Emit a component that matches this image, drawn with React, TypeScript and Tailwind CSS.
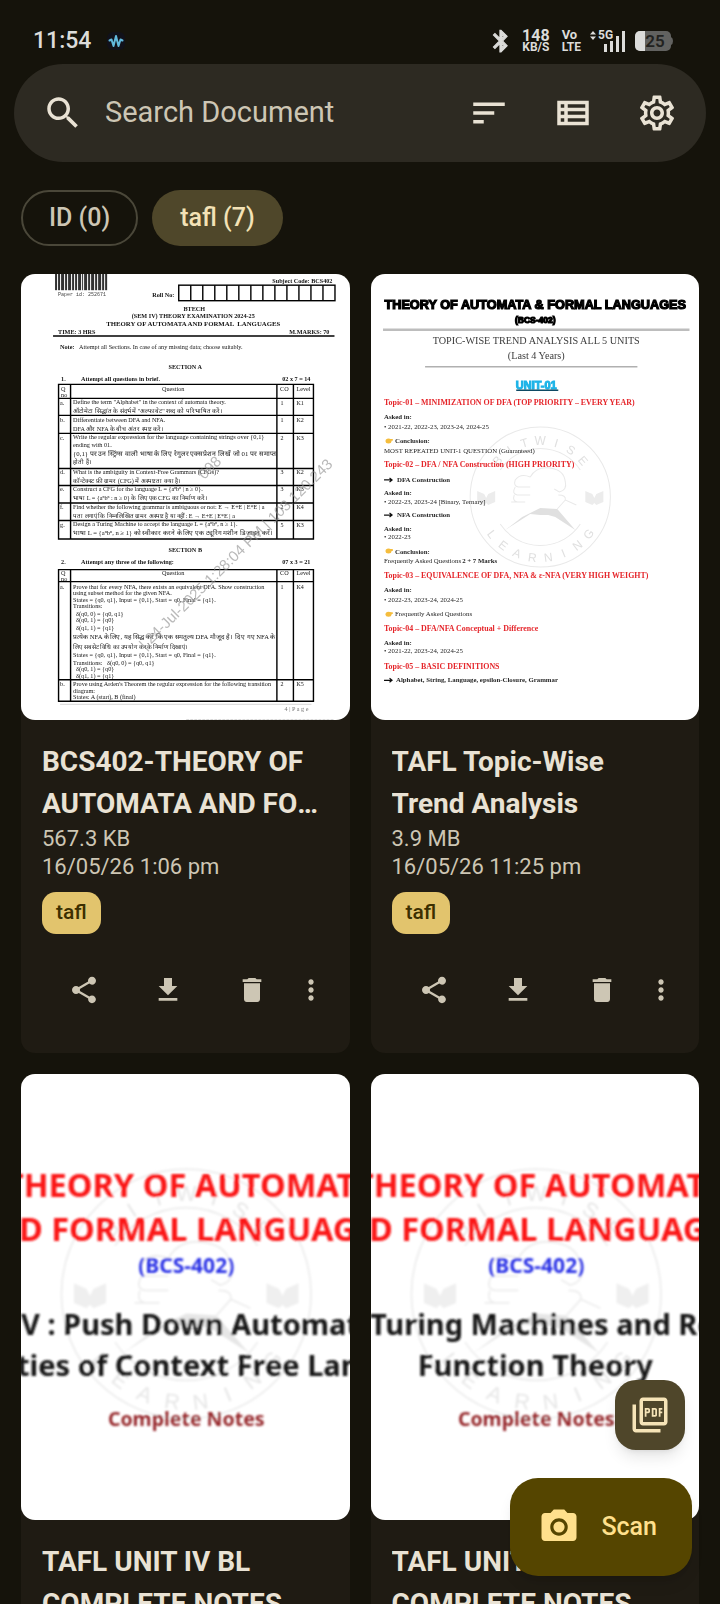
import type { ReactNode } from "react";

/* ---------- icons ---------- */

const ICONS = {
  search:
    "M15.5 14h-.79l-.28-.27C15.41 12.59 16 11.11 16 9.5 16 5.91 13.09 3 9.5 3S3 5.91 3 9.5 5.91 16 9.5 16c1.61 0 3.09-.59 4.23-1.57l.27.28v.79l5 4.99L20.49 19l-4.99-5zm-6 0C7.01 14 5 11.99 5 9.5S7.01 5 9.5 5 14 7.01 14 9.5 11.99 14 9.5 14z",
  sort: "M3 18h6v-2H3v2zM3 6v2h18V6H3zm0 7h12v-2H3v2z",
  list: "M3 5v14h18V5H3zm4 2v2H5V7h2zm-2 6v-2h2v2H5zm0 2h2v2H5v-2zm14 2H9v-2h10v2zm0-4H9v-2h10v2zm0-4H9V7h10v2z",
  settings:
    "M19.43 12.98c.04-.32.07-.64.07-.98 0-.34-.03-.66-.07-.98l2.11-1.65c.19-.15.24-.42.12-.64l-2-3.46c-.09-.16-.26-.25-.44-.25-.06 0-.12.01-.17.03l-2.49 1c-.52-.4-1.08-.73-1.69-.98l-.38-2.65C14.46 2.18 14.25 2 14 2h-4c-.25 0-.46.18-.49.42l-.38 2.65c-.61.25-1.17.59-1.69.98l-2.49-1c-.06-.02-.12-.03-.18-.03-.17 0-.34.09-.43.25l-2 3.46c-.13.22-.07.49.12.64l2.11 1.65c-.04.32-.07.65-.07.98 0 .33.03.66.07.98l-2.11 1.65c-.19.15-.24.42-.12.64l2 3.46c.09.16.26.25.44.25.06 0 .12-.01.17-.03l2.49-1c.52.4 1.08.73 1.69.98l.38 2.65c.03.24.24.42.49.42h4c.25 0 .46-.18.49-.42l.38-2.65c.61-.25 1.17-.59 1.69-.98l2.49 1c.06.02.12.03.18.03.17 0 .34-.09.43-.25l2-3.46c.12-.22.07-.49-.12-.64l-2.11-1.65zm-1.98-1.71c.04.31.05.52.05.73 0 .21-.02.43-.05.73l-.14 1.13.89.7 1.08.84-.7 1.21-1.27-.51-1.04-.42-.9.68c-.43.32-.84.56-1.25.73l-1.06.43-.16 1.13-.2 1.35h-1.4l-.19-1.35-.16-1.13-1.06-.43c-.43-.18-.83-.41-1.23-.71l-.91-.7-1.06.43-1.27.51-.7-1.21 1.08-.84.89-.7-.14-1.13c-.03-.31-.05-.54-.05-.74s.02-.43.05-.73l.14-1.13-.89-.7-1.08-.84.7-1.21 1.27.51 1.04.42.9-.68c.43-.32.84-.56 1.25-.73l1.06-.43.16-1.13.2-1.35h1.39l.19 1.35.16 1.13 1.06.43c.43.18.83.41 1.23.71l.91.7 1.06-.43 1.27-.51.7 1.21-1.07.85-.89.7.14 1.13zM12 8c-2.21 0-4 1.79-4 4s1.79 4 4 4 4-1.79 4-4-1.79-4-4-4zm0 6c-1.1 0-2-.9-2-2s.9-2 2-2 2 .9 2 2-.9 2-2 2z",
  share:
    "M18 16.08c-.76 0-1.44.3-1.96.77L8.91 12.7c.05-.23.09-.46.09-.7s-.04-.47-.09-.7l7.05-4.11c.54.5 1.25.81 2.04.81 1.66 0 3-1.34 3-3s-1.34-3-3-3-3 1.34-3 3c0 .24.04.47.09.7L8.04 9.81C7.5 9.31 6.79 9 6 9c-1.66 0-3 1.34-3 3s1.34 3 3 3c.79 0 1.5-.31 2.04-.81l7.12 4.16c-.05.21-.08.43-.08.65 0 1.61 1.31 2.92 2.92 2.92s2.92-1.31 2.92-2.92-1.31-2.92-2.92-2.92z",
  download: "M19 9h-4V3H9v6H5l7 7 7-7zM5 18v2h14v-2H5z",
  trash: "M6 19c0 1.1.9 2 2 2h8c1.1 0 2-.9 2-2V7H6v12zM19 4h-3.5l-1-1h-5l-1 1H5v2h14V4z",
  more: "M12 8c1.1 0 2-.9 2-2s-.9-2-2-2-2 .9-2 2 .9 2 2 2zm0 2c-1.1 0-2 .9-2 2s.9 2 2 2 2-.9 2-2-.9-2-2-2zm0 6c-1.1 0-2 .9-2 2s.9 2 2 2 2-.9 2-2-.9-2-2-2z",
  pdf: "M20 2H8c-1.1 0-2 .9-2 2v12c0 1.1.9 2 2 2h12c1.1 0 2-.9 2-2V4c0-1.1-.9-2-2-2zm0 14H8V4h12v12zM4 6H2v14c0 1.1.9 2 2 2h14v-2H4V6zm12 6V9c0-.55-.45-1-1-1h-2v5h2c.55 0 1-.45 1-1zm-2-3h1v3h-1V9zm4 2h1v-1h-1V9h1V8h-2v5h1zm-8 0h1c.55 0 1-.45 1-1V9c0-.55-.45-1-1-1H9v5h1v-2zm0-2h1v1h-1V9z",
  camera:
    "M12 8.8a3.2 3.2 0 1 0 0 6.4 3.2 3.2 0 0 0 0-6.4zM9 2L7.17 4H4c-1.1 0-2 .9-2 2v12c0 1.1.9 2 2 2h16c1.1 0 2-.9 2-2V6c0-1.1-.9-2-2-2h-3.17L15 2H9zm3 15c-2.76 0-5-2.24-5-5s2.24-5 5-5 5 2.24 5 5-2.24 5-5 5z",
  bluetooth:
    "M17.71 7.71L12 2h-1v7.59L6.41 5 5 6.41 10.59 12 5 17.59 6.41 19 11 14.41V22h1l5.71-5.71-4.3-4.29 4.3-4.29zM13 5.83l1.88 1.88L13 9.59V5.83zm1.88 10.46L13 18.17v-3.76l1.88 1.88z",
};

function Icon({ name, className }: { name: keyof typeof ICONS; className: string }) {
  return (
    <svg viewBox="0 0 24 24" fill="currentColor" aria-hidden="true" className={className}>
      <path d={ICONS[name]} />
    </svg>
  );
}

/* ---------- status bar ---------- */

function StatusBar() {
  return (
    <div className="flex h-16 shrink-0 items-center justify-between pt-[18px] pr-[47px] pl-[33px] text-[#dcdcda]">
      <div className="flex items-center gap-4">
        <span className="text-[23px] font-medium">11:54</span>
        <svg viewBox="0 0 18 18" className="size-[18px]" aria-hidden="true">
          <rect width="18" height="18" rx="6" fill="#11111a" />
          <path
            d="M2.500 8.500l2-1 2 6.500 2.500-10 2.500 10 2-6.500 2 1"
            fill="none"
            stroke="#62b9dc"
            strokeWidth="2"
            strokeLinecap="round"
            strokeLinejoin="round"
          />
        </svg>
      </div>
      <div className="flex items-center gap-2">
        <Icon name="bluetooth" className="size-[26px] stroke-current stroke-1" />
        <div className="flex flex-col items-center font-bold">
          <span className="text-[16px] leading-[13px]">148</span>
          <span className="text-[12px] leading-[11px]">KB/S</span>
        </div>
        <div className="flex flex-col items-start pl-1 font-bold">
          <span className="text-[13px] leading-3">Vo</span>
          <span className="text-[12px] leading-3">LTE</span>
        </div>
        <svg viewBox="0 0 38 24" className="h-6 w-[38px]" fill="currentColor" aria-hidden="true">
          <path d="M1 5.500L4 2l3 3.500zM1 7.500L4 11l3-3.500z" />
          <text x="9" y="10" fontSize="12" fontWeight="700" fontFamily="Roboto, sans-serif">
            5G
          </text>
          <rect x="15" y="15" width="3" height="8" />
          <rect x="21" y="12" width="3" height="11" />
          <rect x="27" y="7" width="3" height="16" />
          <rect x="33" y="2" width="3" height="21" />
        </svg>
        <svg viewBox="0 0 38 22" className="h-[22px] w-[38px]" aria-hidden="true">
          <rect x="0" y="1" width="36" height="20" rx="5" fill="#626260" />
          <path d="M36 7q2 1 2 4t-2 4z" fill="#626260" />
          <path d="M5 1h5v20H5a5 5 0 0 1-5-5V6a5 5 0 0 1 5-5z" fill="#dcdcda" />
          <text x="20" y="17" textAnchor="middle" fontSize="17" fontWeight="600" fontFamily="Roboto, sans-serif" fill="#22221f">
            25
          </text>
        </svg>
      </div>
    </div>
  );
}

/* ---------- thumbnails ---------- */

const SERIF = "'Liberation Serif', serif";

function Page({ id, blur, label, children }: { id: string; blur: number; label: string; children: ReactNode }) {
  return (
    <svg
      viewBox="0 0 328 446"
      preserveAspectRatio="xMidYMid slice"
      role="img"
      aria-label={label}
      className="block h-[446px] w-full rounded-[14px] bg-white"
    >
      <defs>
        <filter id={id} x="-5%" y="-5%" width="110%" height="110%">
          <feGaussianBlur stdDeviation={blur} />
        </filter>
      </defs>
      <g filter={`url(#${id})`}>{children}</g>
    </svg>
  );
}

function Seal({ x, y, scale, opacity = 1 }: { x: number; y: number; scale: number; opacity?: number }) {
  return (
    <g transform={`translate(${x} ${y}) scale(${scale})`} opacity={opacity} fill="none" stroke="#e9e9e9" strokeWidth="1">
      <circle r="70" />
      <path d="M-40 -27A48 48 0 0 1 40 -27M40 27A48 48 0 0 1 -40 27" />
      <g fill="#e0e0e0" stroke="none" fontSize="12" fontFamily="'Liberation Sans', sans-serif" textAnchor="middle">
        {"BITWISE".split("").map((c, i) => (
          <text key={i} y="-52" transform={`rotate(${(i - 3) * 16.5})`}>
            {c}
          </text>
        ))}
        {"LEARNING".split("").map((c, i) => (
          <text key={i} y="65" transform={`rotate(${(3.5 - i) * 15})`}>
            {c}
          </text>
        ))}
      </g>
      <path d="M-10 -20q-10 -4 -15 3q-2 6 3 7h12M-25 -10q-4 7 2 8h13M-26 -2q-2 6 3 7h8M-24 5l-5 0M-10 -20q6 -11 20 -9q14 2 15 14q2 8 -6 10l-5 -3M18 -2q8 0 7 5l11 5M25 3l-8 9" />
      <path d="M-35 33L-18 20L0 11L17 12L35 33L15 20L8 18L0 18L-10 17Z" fill="#e0e0e0" stroke="none" />
      <g fill="#ececec" stroke="none">
        <path d="M-63 -6l7 3l2 4l2-4l7-3v11l-7 3l-2-2l-2 2l-7-3z" />
        <path d="M45 -6l7 3l2 4l2-4l7-3v11l-7 3l-2-2l-2 2l-7-3z" />
      </g>
    </g>
  );
}

type Line = { x: number; y: number; t: string; s?: number; b?: boolean; a?: "middle" | "end"; c?: string };

function Lines({ lines, color, size }: { lines: Line[]; color: string; size: number }) {
  return (
    <g fontFamily={SERIF}>
      {lines.map((l, i) => (
        <text
          key={i}
          x={l.x}
          y={l.y}
          fontSize={l.s ?? size}
          fontWeight={l.b ? 700 : 400}
          textAnchor={l.a ?? "start"}
          fill={l.c ?? color}
        >
          {l.t}
        </text>
      ))}
    </g>
  );
}

const EXAM_LINES: Line[] = [
  { x: 311, y: 9, t: "Subject Code: BCS402", b: true, a: "end" },
  { x: 131, y: 23, t: "Roll No:", b: true },
  { x: 173, y: 37, t: "BTECH", b: true, a: "middle" },
  { x: 172, y: 44, t: "(SEM IV) THEORY EXAMINATION 2024-25", b: true, a: "middle" },
  { x: 172, y: 52, t: "THEORY OF AUTOMATA AND FORMAL \u00a0LANGUAGES", s: 6.8, b: true, a: "middle" },
  { x: 37, y: 60, t: "TIME: 3 HRS", b: true },
  { x: 308, y: 60, t: "M.MARKS: 70", b: true, a: "end" },
  { x: 39, y: 75, t: "Note:", b: true },
  { x: 58, y: 75, t: "Attempt all Sections. In case of any missing data; choose suitably." },
  { x: 164, y: 95, t: "SECTION A", b: true, a: "middle" },
  { x: 40, y: 107, t: "1.", b: true },
  { x: 60, y: 107, t: "Attempt all questions in brief.", b: true },
  { x: 289, y: 107, t: "02 x 7 = 14", b: true, a: "end" },
  { x: 40, y: 117, t: "Q" },
  { x: 40, y: 123, t: "no" },
  { x: 152, y: 117, t: "Question", a: "middle" },
  { x: 263, y: 117, t: "CO", a: "middle" },
  { x: 282, y: 117, t: "Level", a: "middle" },
  { x: 39, y: 131, t: "a." },
  { x: 52, y: 130, t: "Define the term \"Alphabet\" in the context of automata theory." },
  { x: 52, y: 139, t: "ऑटोमेटा सिद्धांत के संदर्भ में \"अल्फाबेट\" शब्द को परिभाषित करें।" },
  { x: 39, y: 148, t: "b." },
  { x: 52, y: 148, t: "Differentiate between DFA and NFA." },
  { x: 52, y: 157, t: "DFA और NFA के बीच अंतर स्पष्ट करें।" },
  { x: 39, y: 166, t: "c." },
  { x: 52, y: 165, t: "Write the regular expression for the language containing strings over {0,1}", s: 6.4 },
  { x: 52, y: 173, t: "ending with 01." },
  { x: 52, y: 182, t: "{0,1} पर उन स्ट्रिंग्स वाली भाषा के लिए रेगुलर एक्सप्रेशन लिखें जो 01 पर समाप्त", s: 6.8 },
  { x: 52, y: 190, t: "होती हैं।" },
  { x: 39, y: 200, t: "d." },
  { x: 52, y: 200, t: "What is the ambiguity in Context-Free Grammars (CFGs)?" },
  { x: 52, y: 209, t: "कॉन्टेक्स्ट फ्री ग्रामर (CFG) में अस्पष्टता क्या है।" },
  { x: 39, y: 217, t: "e." },
  { x: 52, y: 217, t: "Construct a CFG for the language L = {aⁿbⁿ | n ≥ 0}." },
  { x: 52, y: 226, t: "भाषा L = {aⁿbⁿ : n ≥ 0} के लिए एक CFG का निर्माण करें।" },
  { x: 39, y: 235, t: "f." },
  { x: 52, y: 235, t: "Find whether the following grammar is ambiguous or not: E → E+E | E*E | a" },
  { x: 52, y: 244, t: "पता लगाएं कि निम्नलिखित ग्रामर अस्पष्ट है या नहीं: E → E+E | E*E | a" },
  { x: 39, y: 253, t: "g." },
  { x: 52, y: 252, t: "Design a Turing Machine to accept the language L = {aⁿbⁿ, n ≥ 1}." },
  { x: 52, y: 261, t: "भाषा L = {aⁿbⁿ, n ≥ 1} को स्वीकार करने के लिए एक ट्यूरिंग मशीन डिज़ाइन करें।", s: 6.6 },
  { x: 164, y: 278, t: "SECTION B", b: true, a: "middle" },
  { x: 40, y: 290, t: "2.", b: true },
  { x: 60, y: 290, t: "Attempt any three of the following:", b: true },
  { x: 289, y: 290, t: "07 x 3 = 21", b: true, a: "end" },
  { x: 40, y: 301, t: "Q" },
  { x: 40, y: 307, t: "no" },
  { x: 152, y: 301, t: "Question", a: "middle" },
  { x: 263, y: 301, t: "CO", a: "middle" },
  { x: 282, y: 301, t: "Level", a: "middle" },
  { x: 39, y: 315, t: "a." },
  { x: 52, y: 315, t: "Prove that for every NFA, there exists an equivalent DFA. Show construction" },
  { x: 52, y: 321, t: "using subset method for the given NFA." },
  { x: 52, y: 328, t: "States = {q0, q1}, Input = {0,1}, Start = q0, Final = {q1}." },
  { x: 52, y: 334, t: "Transitions:" },
  { x: 55, y: 342, t: "δ(q0, 0) = {q0, q1}" },
  { x: 55, y: 348, t: "δ(q0, 1) = {q0}" },
  { x: 55, y: 356, t: "δ(q1, 1) = {q1}" },
  { x: 52, y: 365, t: "प्रत्येक NFA के लिए, यह सिद्ध करें कि एक समतुल्य DFA मौजूद है। दिए गए NFA के", s: 6.6 },
  { x: 52, y: 375, t: "लिए सबसेट विधि का उपयोग करके निर्माण दिखाएं।" },
  { x: 52, y: 383, t: "States = {q0, q1}, Input = {0,1}, Start = q0, Final = {q1}." },
  { x: 52, y: 391, t: "Transitions: \u00a0 δ(q0, 0) = {q0, q1}" },
  { x: 55, y: 397, t: "δ(q0, 1) = {q0}" },
  { x: 55, y: 404, t: "δ(q1, 1) = {q1}" },
  { x: 39, y: 412, t: "b." },
  { x: 52, y: 412, t: "Prove using Arden's Theorem the regular expression for the following transition" },
  { x: 52, y: 419, t: "diagram:" },
  { x: 52, y: 425, t: "States: A (start), B (final)" },
  { x: 287, y: 437, t: "4 | P a g e", a: "end", c: "#777" },
];

const EXAM_LEVELS: [number, string, string][] = [
  [131, "1", "K1"],
  [148, "1", "K2"],
  [166, "2", "K3"],
  [200, "3", "K2"],
  [217, "3", "K3"],
  [235, "2", "K4"],
  [253, "5", "K3"],
  [315, "1", "K4"],
  [412, "2", "K5"],
];

const BARS = [2, 1, 2, 1, 3, 1, 2, 1, 3, 1, 2, 1, 2, 1, 3, 1, 1, 1, 3, 1, 2, 1, 3, 1, 2, 1, 3, 1, 2, 1, 2];

function ExamPaper() {
  let bx = 34;
  return (
    <Page id="soft-exam" blur={0.6} label="BCS402 question paper">
      {BARS.map((w, i) => {
        const x = bx;
        bx += w;
        return i % 2 ? null : <rect key={i} x={x} y="0" width={w} height="16.500" fill="#333" />;
      })}
      <text x="37" y="22" fontSize="5" fontFamily="'Liberation Mono', monospace" fill="#444">
        Paper id: 252671
      </text>
      <g fill="none" stroke="#000" strokeWidth="1.400">
        <rect x="157.500" y="11.500" width="156" height="15.500" />
        {Array.from({ length: 12 }, (_, i) => (
          <path key={i} d={`M${169.5 + i * 12} 11.5v15.5`} />
        ))}
        <path d="M32 62.300H313" />
        <path d="M37.500 110.500H292V265H37.500ZM49.500 110.500V265M255.500 110.500V265M272 110.500V265M37.500 124.500H292M37.500 141.500H292M37.500 159.500H292M37.500 194.500H292M37.500 211.500H292M37.500 229H292M37.500 246.500H292" />
        <path d="M37.500 295.500H292V427H37.500ZM49.500 295.500V427M255.500 295.500V427M272 295.500V427M37.500 307.500H292M37.500 405.500H292" />
      </g>
      <path d="M39 430H290" stroke="#ccc" strokeWidth="0.800" />
      <path d="M165 445.500H313" stroke="#ccc" strokeWidth="1" strokeDasharray="3 1" />
      <Lines lines={EXAM_LINES} color="#141414" size={6.2} />
      <g fontFamily={SERIF} fontSize="6" fill="#141414">
        {EXAM_LEVELS.map(([y, co, level]) => (
          <g key={y}>
            <text x="259" y={y}>{co}</text>
            <text x="275" y={y}>{level}</text>
          </g>
        ))}
      </g>
      <g fontFamily="'Liberation Sans', sans-serif" fontSize="15" fill="#8a8a8a" fillOpacity="0.600">
        <text transform="translate(124 376) rotate(-44.500)">| 24-Jul-2025 1:28:04 PM | 103.120.243</text>
        <text transform="translate(183 206) rotate(-44.500)">098</text>
      </g>
    </Page>
  );
}

const RED = "#e5262b";

const TREND_LINES: Line[] = [
  { x: 165, y: 70, t: "TOPIC-WISE TREND ANALYSIS ALL 5 UNITS", s: 10.2, a: "middle", c: "#3c3c3c" },
  { x: 165, y: 85, t: "(Last 4 Years)", s: 10.2, a: "middle", c: "#3c3c3c" },
  { x: 13, y: 131, t: "Topic-01 – MINIMIZATION OF DFA (TOP PRIORITY – EVERY YEAR)", s: 7.9, b: true, c: RED },
  { x: 13, y: 145, t: "Asked in:", b: true },
  { x: 13, y: 155, t: "• 2021-22, 2022-23, 2023-24, 2024-25" },
  { x: 24, y: 169, t: "Conclusion:", b: true },
  { x: 13, y: 179, t: "MOST REPEATED UNIT-1 QUESTION (Guaranteed)" },
  { x: 13, y: 193, t: "Topic-02 – DFA / NFA Construction (HIGH PRIORITY)", s: 7.9, b: true, c: RED },
  { x: 26, y: 208, t: "DFA Construction", b: true },
  { x: 13, y: 221, t: "Asked in:", b: true },
  { x: 13, y: 230, t: "• 2022-23, 2023-24 [Binary, Ternary]" },
  { x: 26, y: 243, t: "NFA Construction", b: true },
  { x: 13, y: 257, t: "Asked in:", b: true },
  { x: 13, y: 265, t: "• 2022-23" },
  { x: 24, y: 280, t: "Conclusion:", b: true },
  { x: 13, y: 289, t: "Frequently Asked Questions" },
  { x: 91, y: 289, t: "2 + 7 Marks", b: true },
  { x: 13, y: 304, t: "Topic-03 – EQUIVALENCE OF DFA, NFA & ε-NFA (VERY HIGH WEIGHT)", s: 7.9, b: true, c: RED },
  { x: 13, y: 318, t: "Asked in:", b: true },
  { x: 13, y: 328, t: "• 2022-23, 2023-24, 2024-25" },
  { x: 24, y: 342, t: "Frequently Asked Questions" },
  { x: 13, y: 357, t: "Topic-04 – DFA/NFA Conceptual + Difference", s: 7.9, b: true, c: RED },
  { x: 13, y: 371, t: "Asked in:", b: true },
  { x: 13, y: 379, t: "• 2021-22, 2023-24, 2024-25" },
  { x: 13, y: 395, t: "Topic-05 – BASIC DEFINITIONS", s: 7.9, b: true, c: RED },
  { x: 25, y: 408, t: "Alphabet, String, Language, epsilon-Closure, Grammar", b: true },
];

function TrendSheet() {
  return (
    <Page id="soft-trend" blur={0.6} label="TAFL topic-wise trend analysis">
      <Seal x={169} y={223} scale={1} />
      <g fontFamily="'Liberation Sans', sans-serif" fontWeight="700" textAnchor="middle">
        <g stroke="#000" strokeWidth="1.200">
          <text x="164" y="35" fontSize="12.700">THEORY OF AUTOMATA &amp; FORMAL LANGUAGES</text>
          <text x="164" y="49" fontSize="8.500">(BCS-402)</text>
        </g>
        <text x="165" y="115" fontSize="11" fill="#1fb4e8" stroke="#1fb4e8" strokeWidth="1">
          UNIT-01
        </text>
      </g>
      <path d="M145 116.500H187" stroke="#0b4a63" strokeWidth="1.500" />
      <path d="M12 56H318" stroke="#bdbdbd" strokeWidth="2.500" />
      <path d="M54 93H266" stroke="#b0b0b0" strokeWidth="1.500" />
      <Lines lines={TREND_LINES} color="#262626" size={6.8} />
      {[206, 241, 406].map((y) => (
        <path key={y} d={`M13 ${y}h8m-2.500-2l2.500 2l-2.500 2`} fill="none" stroke="#111" strokeWidth="1.200" />
      ))}
      {[167, 277, 340].map((y) => (
        <g key={y} fill="#f5bd3d">
          <ellipse cx="17.500" cy={y} rx="3" ry="2.500" />
          <rect x="18" y={y - 2} width="4" height="1.800" rx="0.900" />
        </g>
      ))}
    </Page>
  );
}

function NotesCover({ id, lines }: { id: string; lines: { x: number; y: number; t: string; a?: "middle" }[] }) {
  return (
    <Page id={id} blur={0.9} label="Complete notes cover">
      <Seal x={165} y={220} scale={1.78} opacity={0.8} />
      <g fontFamily="'Noto Sans', sans-serif" fontWeight="700" textAnchor="middle">
        <g fontSize="32.500" fill="#fb1417">
          <text x="169" y="123">THEORY OF AUTOMATA</text>
          <text x="160" y="167">AND FORMAL LANGUAGES</text>
        </g>
        <text x="165" y="199" fontSize="21" fill="#2a32e6">(BCS-402)</text>
        <g fontSize="29" fill="#161616">
          {lines.map((l) => (
            <text key={l.t} x={l.x} y={l.y} textAnchor={l.a ?? "start"}>
              {l.t}
            </text>
          ))}
        </g>
        <text x="165" y="352" fontSize="19.500" fill="#96282c">Complete Notes</text>
      </g>
    </Page>
  );
}

/* ---------- document cards ---------- */

function CardButton({ icon, label }: { icon: keyof typeof ICONS; label: string }) {
  return (
    <button type="button" aria-label={label} className="flex h-[84px] w-[84px] items-center justify-center">
      <Icon name={icon} className="size-8" />
    </button>
  );
}

type Doc = { title: [string, string]; size: string; date: string; tag: string; cover: ReactNode };

function DocCard({ doc }: { doc: Doc }) {
  return (
    <article className="min-w-0 rounded-[14px] bg-[#1f1b13]">
      {doc.cover}
      <div className="p-[21px] text-[#cdc6b4]">
        <h2 className="text-[28px] leading-[42px] font-bold text-[#e9e2d4]">
          {doc.title.map((line) => (
            <span key={line} className="block truncate">
              {line}
            </span>
          ))}
        </h2>
        <p className="text-[22px] leading-7">{doc.size}</p>
        <p className="text-[22px] leading-7">{doc.date}</p>
        <span className="mt-[11px] inline-flex h-[42px] items-center rounded-[14px] bg-[#e2c46d] px-3.5 text-[21px] font-medium text-[#3c2f00]">
          {doc.tag}
        </span>
        <div className="mt-3.5 flex">
          <CardButton icon="share" label="Share" />
          <CardButton icon="download" label="Download" />
          <CardButton icon="trash" label="Delete" />
          <button type="button" aria-label="More options" className="flex h-[84px] flex-1 items-center justify-center">
            <Icon name="more" className="size-8 shrink-0" />
          </button>
        </div>
      </div>
    </article>
  );
}

const DOCS: Doc[] = [
  {
    title: ["BCS402-THEORY OF", "AUTOMATA AND FORMAL LANGUAGES"],
    size: "567.3 KB",
    date: "16/05/26 1:06 pm",
    tag: "tafl",
    cover: <ExamPaper />,
  },
  {
    title: ["TAFL Topic-Wise", "Trend Analysis"],
    size: "3.9 MB",
    date: "16/05/26 11:25 pm",
    tag: "tafl",
    cover: <TrendSheet />,
  },
  {
    title: ["TAFL UNIT IV BL", "COMPLETE NOTES"],
    size: "4.2 MB",
    date: "16/05/26 11:25 pm",
    tag: "tafl",
    cover: (
      <NotesCover
        id="soft-unit4"
        lines={[
          { x: 0, y: 261, t: "V : Push Down Automata" },
          { x: -4, y: 302, t: "ties of Context Free Languages" },
        ]}
      />
    ),
  },
  {
    title: ["TAFL UNIT V BL", "COMPLETE NOTES"],
    size: "4.5 MB",
    date: "16/05/26 11:26 pm",
    tag: "tafl",
    cover: (
      <NotesCover
        id="soft-unit5"
        lines={[
          { x: -1, y: 261, t: "Turing Machines and Recursive" },
          { x: 164, y: 302, t: "Function Theory", a: "middle" },
        ]}
      />
    ),
  },
];

/* ---------- screen ---------- */

function SearchBar() {
  return (
    <form
      role="search"
      className="mx-3.5 flex h-[98px] shrink-0 items-center rounded-full bg-[#2d2a22] pr-[7px] pl-7 text-[#e9e2d4]"
    >
      <label htmlFor="search" className="flex shrink-0" aria-label="Search">
        <Icon name="search" className="size-[42px]" />
      </label>
      <input
        id="search"
        type="search"
        placeholder="Search Document"
        className="ml-[21px] min-w-0 flex-1 bg-transparent text-[29px] outline-none placeholder:text-[#cdc6b4] placeholder:opacity-100"
      />
      {(["sort", "list", "settings"] as const).map((name) => (
        <button key={name} type="button" aria-label={name} className="flex size-[84px] shrink-0 items-center justify-center">
          <Icon name={name} className="size-[42px]" />
        </button>
      ))}
    </form>
  );
}

export default function App() {
  return (
    <div className="relative flex h-screen flex-col overflow-hidden bg-[#15130b] font-[Roboto,sans-serif]">
      <StatusBar />
      <SearchBar />
      <nav className="flex shrink-0 gap-3.5 px-[21px] py-7 text-[25px] font-medium" aria-label="Tags">
        <button type="button" className="h-14 rounded-full border-2 border-[#4a4739] px-[26px] text-[#cdc6b4]">
          ID (0)
        </button>
        <button type="button" aria-pressed="true" className="h-14 rounded-full bg-[#4f472a] px-7 text-[#f3e2b6]">
          tafl (7)
        </button>
      </nav>
      <main className="grid min-h-0 flex-1 grid-cols-2 content-start gap-[21px] overflow-y-auto px-[21px] [scrollbar-width:none]">
        {DOCS.map((doc) => (
          <DocCard key={doc.title.join(" ")} doc={doc} />
        ))}
      </main>
      <div className="absolute right-7 bottom-7 flex flex-col items-end gap-7">
        <button
          type="button"
          aria-label="Import PDF"
          className="mr-[7px] flex size-[70px] items-center justify-center rounded-[21px] bg-[#4f462a] text-[#f6e4b7] shadow-lg"
        >
          <Icon name="pdf" className="size-[42px]" />
        </button>
        <button
          type="button"
          className="flex h-[98px] items-center gap-[21px] rounded-[28px] bg-[#554500] pr-[35px] pl-7 text-[25px] font-medium text-[#ffe08c] shadow-lg"
        >
          <Icon name="camera" className="size-[42px]" />
          Scan
        </button>
      </div>
    </div>
  );
}
